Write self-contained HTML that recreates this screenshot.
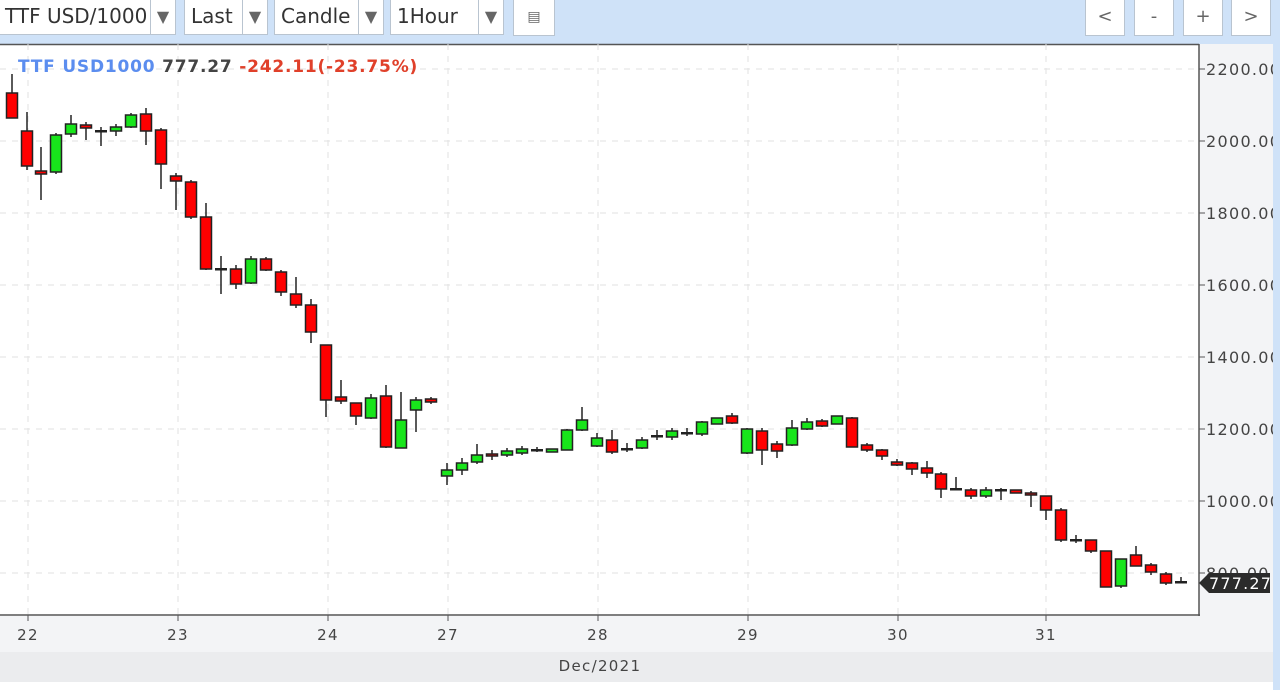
<!DOCTYPE html>
<html><head><meta charset="utf-8"><style>
body{margin:0;width:1280px;height:690px;overflow:hidden;background:#fff;font-family:"Liberation Sans","DejaVu Sans",sans-serif;position:relative}
.top{position:absolute;left:0;top:0;width:1280px;height:44px;background:#cfe2f8}
.sel{position:absolute;top:0;height:35px;background:#fff;border:1px solid #b9c4d0;border-top:none;font-family:"DejaVu Sans",sans-serif;font-size:20px;color:#333;line-height:33px;box-sizing:border-box;overflow:hidden}
.sel span{position:absolute;left:6px;top:0;white-space:nowrap}
.sel i{position:absolute;right:0;top:0;width:24px;height:34px;border-left:1px solid #b9c4d0;font-style:normal;color:#666;font-size:16px;text-align:center;line-height:34px;background:#fff}
.btn{position:absolute;top:0;width:40px;height:36px;background:#fff;border:1px solid #b9c4d0;border-top:none;box-sizing:border-box;text-align:center;line-height:34px;font-family:"DejaVu Sans",sans-serif;font-size:18px;color:#666}
</style></head><body>
<div class="top"></div>
<div class="sel" style="left:-2px;width:178px"><span>TTF USD/1000</span><i>▼</i></div>
<div class="sel" style="left:184px;width:84px"><span>Last</span><i>▼</i></div>
<div class="sel" style="left:274px;width:110px"><span>Candle</span><i>▼</i></div>
<div class="sel" style="left:390px;width:114px"><span>1Hour</span><i>▼</i></div>
<div class="btn" style="left:513px;width:42px;font-size:14px">&#9636;</div>
<div class="btn" style="left:1085px">&lt;</div>
<div class="btn" style="left:1134px">-</div>
<div class="btn" style="left:1183px">+</div>
<div class="btn" style="left:1231px">&gt;</div>
<svg id="c" width="1280" height="690" style="position:absolute;left:0;top:0" font-family="DejaVu Sans, sans-serif">
<rect x="1199" y="44" width="74" height="572" fill="#f3f4f6"/>
<rect x="0" y="616" width="1273" height="36" fill="#f3f4f6"/>
<rect x="0" y="652" width="1273" height="30" fill="#ebecee"/>
<rect x="0" y="44" width="1199" height="572" fill="#fff"/>
<line x1="0" y1="44.5" x2="1199" y2="44.5" stroke="#555" stroke-width="1.5"/>
<g id="grid" stroke="#e2e2e2" stroke-dasharray="6,6"></g>
<g id="cd"></g>
<line x1="1199" y1="44" x2="1199" y2="616" stroke="#555" stroke-width="1.5"/>
<line x1="0" y1="615" x2="1200" y2="615" stroke="#555" stroke-width="1.5"/>
<g id="lab" font-size="15" fill="#444" letter-spacing="1.3"></g>
<text x="600" y="671" font-size="15" fill="#444" text-anchor="middle" letter-spacing="1.3">Dec/2021</text>
<text x="18" y="72" font-size="17" font-weight="bold" letter-spacing="0.8"><tspan fill="#5b8def">TTF USD1000</tspan><tspan fill="#444"> 777.27</tspan><tspan fill="#e0402a"> -242.11(-23.75%)</tspan></text>
<path d="M1199 583 L1209 573 L1270 573 L1270 593 L1209 593 Z" fill="#2b2b2b"/>
<text x="1209" y="589" font-size="16" fill="#fff" letter-spacing="1.2">777.27</text>
<rect x="1273" y="44" width="7" height="646" fill="#cfe2f8"/>
</svg>
<script>
var g=document.getElementById('grid'),lab=document.getElementById('lab'),cd=document.getElementById('cd'),ns='http://www.w3.org/2000/svg';
function el(p,t,a){var e=document.createElementNS(ns,t);for(var k in a)e.setAttribute(k,a[k]);p.appendChild(e);return e}
var ys=[[69,'2200.00'],[141,'2000.00'],[213,'1800.00'],[285,'1600.00'],[357,'1400.00'],[429,'1200.00'],[501,'1000.00'],[573,'800.00']];
ys.forEach(function(y){el(g,'line',{x1:0,y1:y[0],x2:1199,y2:y[0]});el(lab,'line',{x1:1199,y1:y[0],x2:1205,y2:y[0],stroke:'#555'});var t=el(lab,'text',{x:1206,y:y[0]+6,'font-size':16});t.textContent=y[1];});
var xs=[[28,'22'],[178,'23'],[328,'24'],[448,'27'],[598,'28'],[748,'29'],[898,'30'],[1046,'31']];
xs.forEach(function(x){el(g,'line',{x1:x[0],y1:44,x2:x[0],y2:615});el(lab,'line',{x1:x[0],y1:615,x2:x[0],y2:621,stroke:'#555'});var t=el(lab,'text',{x:x[0],y:640,'text-anchor':'middle'});t.textContent=x[1];});
var C=[[12,93,118,74,118],[27,131,166,112,170],[41,171,174,147,200],[56,172,135,133,174],[71,134,124,115,137],[86,125,128,122,140],[101,131,132,127,146],[116,131,127,124,136],[131,127,115,113,128],[146,114,131,108,145],[161,130,164,128,189],[176,176,181,173,210],[191,182,217,180,219],[206,217,269,203,270],[221,269,269,256,294],[236,269,284,265,289],[251,283,259,256,284],[266,259,270,257,271],[281,272,292,270,296],[296,294,305,277,308],[311,305,332,299,343],[326,345,400,345,417],[341,397,401,380,404],[356,403,416,403,425],[371,418,398,394,419],[386,396,447,385,448],[401,448,420,392,448],[416,410,400,397,432],[431,399,402,397,404],
[447,476,470,463,485],[462,470,463,458,475],[477,462,455,444,464],[492,454,456,450,460],[507,455,451,448,457],[522,453,449,446,455],[537,450,450,447,452],[552,452,449,449,452],[567,450,430,429,450],[582,430,420,407,431],[597,446,438,433,447],[612,440,452,430,454],[627,449,449,443,452],[642,448,440,437,449],[657,436,436,430,440],[672,437,431,428,440],[687,433,433,428,436],[702,434,422,421,436],[717,424,418,418,424],[732,416,423,413,424],[747,453,429,428,454],[762,431,450,428,465],[777,444,451,441,458],[792,445,428,420,446],[807,429,422,418,430],[822,421,426,419,427],[837,424,416,416,424],[852,418,447,417,447],[867,445,450,443,452],[882,450,456,449,460],[897,462,465,459,466],[912,463,469,462,475],[927,468,473,461,478],[941,474,489,472,498],[956,489,489,477,490],[971,490,496,488,499],[986,496,490,487,498],[1001,490,490,488,500],[1016,490,493,490,493],[1031,493,495,491,507],[1046,496,510,496,520],[1061,510,540,508,542],[1076,540,540,535,543],[1091,540,551,540,553],[1106,551,587,551,587],[1121,586,559,559,588],[1136,555,566,546,566],[1151,565,572,563,575],[1166,574,583,572,585],[1181,582,582,577,583]];
C.forEach(function(c){var x=c[0],o=c[1],cl=c[2],h=c[3],l=c[4];
el(cd,'line',{x1:x,y1:h,x2:x,y2:l,stroke:'#222','stroke-width':1.5});
var top=Math.min(o,cl),ht=Math.abs(o-cl);
if(ht<2){el(cd,'rect',{x:x-6,y:top-1,width:12,height:2.5,fill:'#222'});}
else el(cd,'rect',{x:x-5.5,y:top,width:11,height:ht,fill:(cl<o?'#18e51b':'#f00'),stroke:'#222','stroke-width':1.5});
});
</script>
</body></html>
